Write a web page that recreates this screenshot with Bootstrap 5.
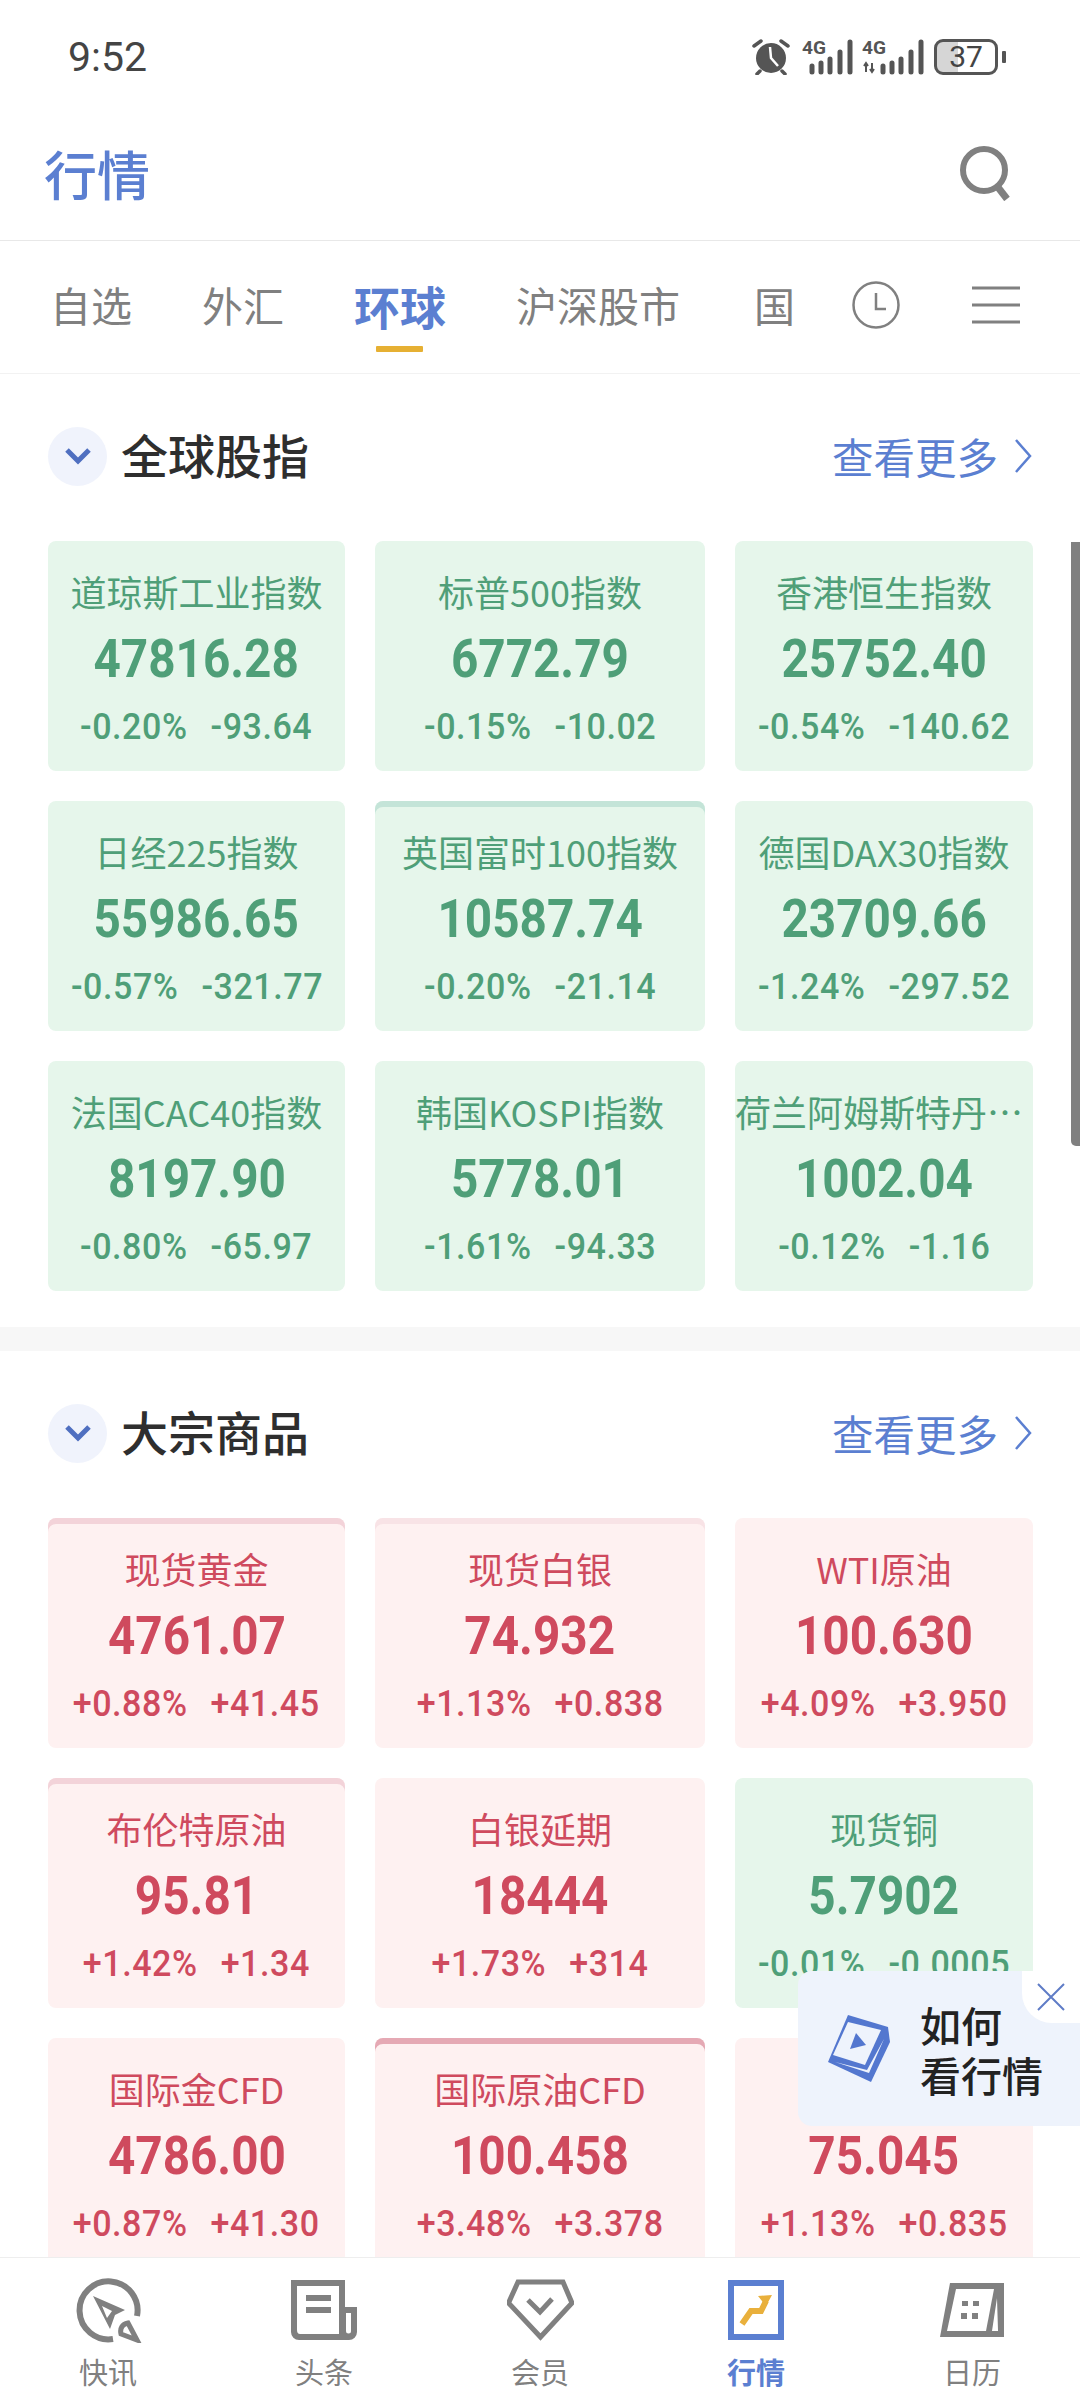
<!DOCTYPE html>
<html lang="zh-CN">
<head>
  <meta charset="UTF-8">
  <meta name="viewport" content="width=device-width, initial-scale=1.0">
  <title>行情</title>
  <link href="https://cdn.jsdelivr.net/npm/bootstrap@5.3.0/dist/css/bootstrap.min.css" rel="stylesheet">
  <style>
    body {
      font-family: "Noto Sans CJK SC", "Noto Sans", sans-serif;
      background-color: #fff;
      margin: 0;
    }
    .app-shell {
      width: 1080px;
      height: 2403px;
      overflow: hidden;
    }
    .status-bar {
      height: 114px;
      padding: 0 74px 0 68px;
      color: #444;
    }
    .status-time { font-family: Roboto, sans-serif; font-size: 41px; line-height: 48px; }
    .battery {
      width: 64px;
      height: 36px;
      border: 3px solid #555;
      border-radius: 9px;
      font-family: Roboto, sans-serif;
      font-size: 30px;
      line-height: 30px;
      text-align: center;
      background: linear-gradient(90deg, #d6d6d6 37%, #fff 37%);
    }
    .battery-tip { width: 4px; height: 12px; background: #555; border-radius: 1px; margin-left: 4px; }
    .alarm-art { margin-right: 12px; }
    .top-head {
      height: 127px;
      padding: 0 66px 8px 44px;
      border-bottom: 1px solid #e8e8e8;
    }
    .top-title { font-size: 53px; font-weight: 500; color: #5b7fd1; line-height: 76px; }
    .tab-bar {
      height: 133px;
      padding: 0 60px 4px 50px;
      border-bottom: 1px solid #f2f2f2;
      gap: 70px;
      font-size: 41px;
      color: #808080;
    }
    .tab-on {
      font-size: 46px;
      font-weight: 700;
      color: #5b7fd1;
      position: relative;
    }
    .tab-on::after {
      content: "";
      position: absolute;
      left: 22px;
      right: 23px;
      bottom: -12px;
      height: 6px;
      background: #e6b033;
      border-radius: 1px;
    }
    .tab-tools { gap: 72px; margin-left: -13px; }
    .market-scroll { height: 1883px; overflow: hidden; position: relative; }
    .mkt-section { padding: 53px 48px 0; }
    .mkt-section + .mkt-section { border-top: 24px solid #f7f7f7; margin-top: 36px; }
    .mkt-head { height: 58px; margin-bottom: 56px; }
    .chev-dot {
      width: 59px;
      height: 59px;
      border-radius: 50%;
      background: #f0f3fc;
      margin-right: 14px;
    }
    .mkt-title { font-size: 47px; font-weight: 500; color: #2e2e2e; line-height: 68px; padding-bottom: 5px; }
    .more-link { font-size: 41.5px; color: #5b7fd1; line-height: 60px; text-decoration: none; }
    .quote-grid {
      display: grid;
      grid-template-columns: 297px 330px 298px;
      grid-auto-rows: 230px;
      gap: 30px 30px;
      width: 985px;
    }
    .quote-tile {
      border-radius: 8px;
      padding-top: 24px;
      overflow: hidden;
      min-width: 0;
    }
    .quote-tile.down { background: #e6f6eb; color: #4f9f78; }
    .quote-tile.up { background: #fef1f1; color: #cf4a5e; }
    .quote-tile.stripe-soft { box-shadow: inset 0 6px 0 #f8e3e6; }
    .quote-tile.stripe-mid { box-shadow: inset 0 6px 0 #f3d3d9; }
    .quote-tile.stripe-hard { box-shadow: inset 0 6px 0 #e5a9b4; }
    .quote-tile.stripe-green { box-shadow: inset 0 6px 0 #c4e4d8; }
    .quote-name { font-size: 36px; line-height: 52px; width: 100%; text-align: center; }
    .quote-price, .quote-delta { font-family: Roboto, sans-serif; white-space: nowrap; }
    .quote-price { font-size: 53px; font-weight: 700; line-height: 62px; margin-top: 11px; transform: scaleX(.9); }
    .quote-delta {
      font-size: 37px;
      font-weight: 500;
      line-height: 44px;
      margin-top: 15px;
      gap: 25px;
      letter-spacing: .6px;
      transform: scaleX(.92);
    }
    .scroll-thumb {
      position: absolute;
      right: 0;
      top: 168px;
      width: 9px;
      height: 604px;
      background: #808080;
      border-radius: 0 0 0 5px;
    }
    .guide-pop {
      position: absolute;
      left: 798px;
      top: 1597px;
      width: 282px;
      height: 155px;
      background: #eef3fc;
      border-radius: 14px 0 0 14px;
      padding-left: 30px;
    }
    .guide-text { font-size: 41px; font-weight: 500; line-height: 50px; color: #222; margin-left: 30px; }
    .guide-close {
      position: absolute;
      right: 0;
      top: 0;
      width: 58px;
      height: 52px;
      background: #fff;
      border-radius: 0 0 0 30px;
    }
    .nav-foot { height: 146px; border-top: 1px solid #eee; background: #fff; }
    .nav-cell { width: 216px; height: 145px; padding-top: 19px; color: #808080; font-size: 29px; }
    .nav-art { height: 66px; }
    .nav-cell span { line-height: 42px; margin-top: 7px; }
    .nav-cell.active { color: #5b7fd1; font-weight: 700; }
  </style>
</head>
<body>
  <div class="app-shell d-flex flex-column">

    <div class="status-bar d-flex align-items-center justify-content-between flex-shrink-0">
      <div class="status-time">9:52</div>
      <div class="d-flex align-items-center">
        <svg class="alarm-art" width="38" height="36" viewBox="0 0 38 36">
          <circle cx="19" cy="19" r="15" fill="#555"/>
          <path d="M18 8 L19 19 L26 27" fill="none" stroke="#fff" stroke-width="2.5"/>
          <path d="M2 7 L9 2 M36 7 L29 2 M8 32 L5 35 M30 32 L33 35" stroke="#555" stroke-width="3.5" stroke-linecap="round"/>
        </svg>
        <svg width="52" height="36" viewBox="0 0 52 36" class="me-2">
          <text x="0" y="15" font-family="Roboto, sans-serif" font-size="19" font-weight="700" fill="#555" textLength="24" lengthAdjust="spacingAndGlyphs">4G</text>
          <g stroke="#555" stroke-width="5" stroke-linecap="round"><path d="M10 27V33M19 24V33M28 20V33M38 13V33M48 3V33"/></g>
        </svg>
        <svg width="64" height="36" viewBox="0 0 64 36" class="me-2">
          <text x="0" y="15" font-family="Roboto, sans-serif" font-size="19" font-weight="700" fill="#555" textLength="24" lengthAdjust="spacingAndGlyphs">4G</text>
          <path d="M4 24V33M2 27L4 24L6 27M10 24V33M8 30L10 33L12 30" stroke="#555" stroke-width="2" fill="none"/>
          <g stroke="#555" stroke-width="5" stroke-linecap="round"><path d="M21 27V33M30 24V33M39 20V33M49 13V33M59 3V33"/></g>
        </svg>
        <div class="battery">37</div>
        <div class="battery-tip"></div>
      </div>
    </div>

    <div class="top-head d-flex align-items-center justify-content-between flex-shrink-0">
      <div class="top-title">行情</div>
      <svg width="56" height="56" viewBox="0 0 56 56">
        <circle cx="26" cy="25" r="21" fill="none" stroke="#808080" stroke-width="6"/>
        <path d="M39 41 L49 54" stroke="#808080" stroke-width="7"/>
      </svg>
    </div>

    <div class="tab-bar d-flex align-items-center flex-shrink-0">
      <div>自选</div>
      <div>外汇</div>
      <div class="tab-on">环球</div>
      <div>沪深股市</div>
      <div class="ms-1">国</div>
      <div class="tab-tools d-flex align-items-center">
        <svg width="48" height="48" viewBox="0 0 48 48">
          <circle cx="24" cy="24" r="22.5" fill="none" stroke="#808080" stroke-width="2.5"/>
          <path d="M24 12 V28 H34" fill="none" stroke="#808080" stroke-width="2.5"/>
        </svg>
        <svg width="48" height="38" viewBox="0 0 48 38">
          <path d="M0 2H48M0 19H48M0 36H48" stroke="#808080" stroke-width="3"/>
        </svg>
      </div>
    </div>

    <div class="market-scroll flex-shrink-0">
      <div id="sections"></div>
      <div class="scroll-thumb"></div>
      <div class="guide-pop d-flex align-items-center">
        <svg width="62" height="67" viewBox="0 0 62 67">
          <path d="M20 0 L60 12 L62 27 L43 67 L0 47 Z" fill="#5377cf"/>
          <path d="M20 7 L53 15 L37 50 L5 40 Z" fill="#eef3fc"/>
          <path d="M56 24 L41 58 L7 47 L39 55 Z" fill="#eef3fc"/>
          <path d="M28 18 L38 30 L22 34 Z" fill="#5377cf"/>
        </svg>
        <div class="guide-text">如何<br>看行情</div>
        <div class="guide-close d-flex align-items-center justify-content-center">
          <svg width="28" height="28" viewBox="0 0 28 28">
            <path d="M1 1 L27 27 M27 1 L1 27" stroke="#5f7cc6" stroke-width="2"/>
          </svg>
        </div>
      </div>
    </div>

    <div class="nav-foot d-flex flex-shrink-0">
      <div class="nav-cell d-flex flex-column align-items-center">
        <svg class="nav-art" width="67" height="66" viewBox="0 0 67 66">
          <path d="M62 39 A29 29 0 1 0 38 62" fill="none" stroke="#808080" stroke-width="6"/>
          <path fill-rule="evenodd" d="M18 19 L50 33 L40 38 L35 52 Z M27 29 L32 41 L37 34 Z" fill="#808080"/>
          <path d="M53 46 L62 63 L46 57 Q44 48 53 46 Z" fill="none" stroke="#808080" stroke-width="5"/>
        </svg>
        <span>快讯</span>
      </div>
      <div class="nav-cell d-flex flex-column align-items-center">
        <svg class="nav-art" width="67" height="66" viewBox="0 -3 67 66">
          <path d="M0 0 H54 V27 H66 V52 a8 8 0 0 1-8 8 H8 a8 8 0 0 1 -8-8 Z" fill="#808080"/>
          <path d="M6 6 H48 V54 H9 Q6 54 6 50 Z" fill="#fff"/>
          <path d="M55 33 H60 V51 a2.5 2.5 0 0 1-5 0 Z" fill="#fff"/>
          <path d="M15 15 H40 V21 H15 Z M15 27 H40 V33 H15 Z" fill="#808080"/>
        </svg>
        <span>头条</span>
      </div>
      <div class="nav-cell d-flex flex-column align-items-center">
        <svg class="nav-art" width="67" height="66" viewBox="0 -3 67 66">
          <path d="M11 2 H56 L65 23 L33.5 57 L1.5 23 Z" fill="none" stroke="#808080" stroke-width="5"/>
          <path d="M21 20 L33 32 L45 19" fill="none" stroke="#808080" stroke-width="5"/>
        </svg>
        <span>会员</span>
      </div>
      <div class="nav-cell active d-flex flex-column align-items-center">
        <svg class="nav-art" width="56" height="66" viewBox="0 -3 56 66">
          <rect x="3" y="3" width="50" height="54" fill="#fff" stroke="#5b7fd1" stroke-width="6"/>
          <path d="M14 44 L23 31 H33 L38 21" fill="none" stroke="#e9b03c" stroke-width="6"/>
          <path d="M30 16 L44 15 L38 26 Z" fill="#e9b03c"/>
        </svg>
        <span>行情</span>
      </div>
      <div class="nav-cell d-flex flex-column align-items-center">
        <svg class="nav-art" width="64" height="66" viewBox="0 -6 64 66">
          <path d="M10 0 H64 V54 H0 Z" fill="#808080"/>
          <path d="M16 6 H54 L46 48 H7 Z" fill="#fff"/>
          <path d="M57 15 L58 48 H52 Z" fill="#fff"/>
          <path d="M22 18h6v5h-6z M33 18h6v5h-6z M21 30h6v6h-6z M32 30h6v6h-6z" fill="#808080"/>
        </svg>
        <span>日历</span>
      </div>
    </div>
  </div>

  <script>
    const sections = [
      {
        title: "全球股指",
        items: [
          ["道琼斯工业指数", "47816.28", "-0.20%", "-93.64", "down"],
          ["标普500指数", "6772.79", "-0.15%", "-10.02", "down"],
          ["香港恒生指数", "25752.40", "-0.54%", "-140.62", "down"],
          ["日经225指数", "55986.65", "-0.57%", "-321.77", "down"],
          ["英国富时100指数", "10587.74", "-0.20%", "-21.14", "down stripe-green"],
          ["德国DAX30指数", "23709.66", "-1.24%", "-297.52", "down"],
          ["法国CAC40指数", "8197.90", "-0.80%", "-65.97", "down"],
          ["韩国KOSPI指数", "5778.01", "-1.61%", "-94.33", "down"],
          ["荷兰阿姆斯特丹指数", "1002.04", "-0.12%", "-1.16", "down"]
        ]
      },
      {
        title: "大宗商品",
        items: [
          ["现货黄金", "4761.07", "+0.88%", "+41.45", "up stripe-mid"],
          ["现货白银", "74.932", "+1.13%", "+0.838", "up stripe-soft"],
          ["WTI原油", "100.630", "+4.09%", "+3.950", "up"],
          ["布伦特原油", "95.81", "+1.42%", "+1.34", "up stripe-mid"],
          ["白银延期", "18444", "+1.73%", "+314", "up"],
          ["现货铜", "5.7902", "-0.01%", "-0.0005", "down"],
          ["国际金CFD", "4786.00", "+0.87%", "+41.30", "up"],
          ["国际原油CFD", "100.458", "+3.48%", "+3.378", "up stripe-hard"],
          ["国际银CFD", "75.045", "+1.13%", "+0.835", "up"]
        ]
      }
    ];

    const chevron = '<svg width="26" height="18" viewBox="0 0 26 18"><path d="M2 3 L13 14 L24 3" fill="none" stroke="#4f6fc0" stroke-width="5"/></svg>';
    const arrow = '<svg class="ms-3" width="18" height="34" viewBox="0 0 18 34"><path d="M2 1 L16 17 L2 33" fill="none" stroke="#5b7fd1" stroke-width="2.5"/></svg>';

    document.getElementById("sections").innerHTML = sections.map(s => `
      <section class="mkt-section">
        <div class="mkt-head d-flex align-items-center justify-content-between">
          <div class="d-flex align-items-center">
            <div class="chev-dot d-flex align-items-center justify-content-center">${chevron}</div>
            <div class="mkt-title">${s.title}</div>
          </div>
          <a class="more-link d-flex align-items-center">查看更多${arrow}</a>
        </div>
        <div class="quote-grid">
          ${s.items.map(q => `
            <div class="quote-tile ${q[4]} d-flex flex-column align-items-center">
              <div class="quote-name text-truncate">${q[0]}</div>
              <div class="quote-price">${q[1]}</div>
              <div class="quote-delta d-flex"><span>${q[2]}</span><span>${q[3]}</span></div>
            </div>`).join("")}
        </div>
      </section>`).join("");
  </script>
  <script src="https://cdn.jsdelivr.net/npm/bootstrap@5.3.0/dist/js/bootstrap.bundle.min.js"></script>
</body>
</html>
